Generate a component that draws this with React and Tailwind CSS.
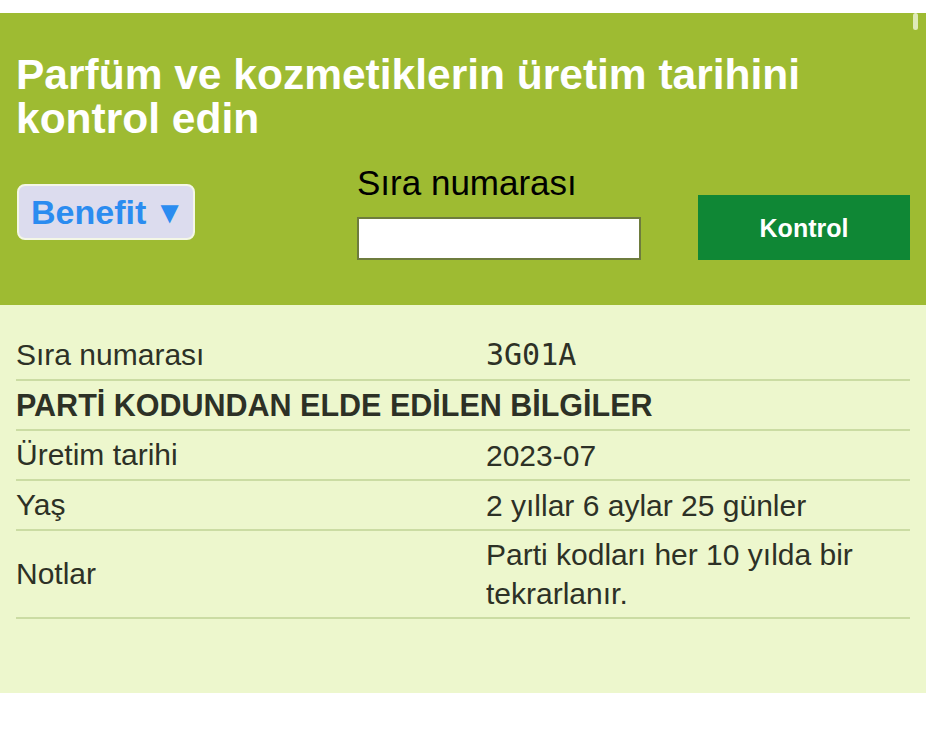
import { useState } from "react";

const rows = [
  { label: "Sıra numarası", value: "3G01A", mono: true },
  { label: "PARTİ KODUNDAN ELDE EDİLEN BİLGİLER", heading: true },
  { label: "Üretim tarihi", value: "2023-07" },
  { label: "Yaş", value: "2 yıllar 6 aylar 25 günler" },
  { label: "Notlar", value: "Parti kodları her 10 yılda bir tekrarlanır." },
];

export default function App() {
  const [serial, setSerial] = useState("");

  return (
    <div className="relative min-h-[741px] bg-white pt-[13px] font-['Liberation_Sans',Arial,sans-serif]">
      <div className="absolute right-[8px] top-[13px] h-[17px] w-[5px] rounded-full bg-[#dfeab8]" />

      <section className="bg-[#9ebb32] px-4 pt-[40px] pb-[45px]">
        <h1 className="text-[42.5px] font-bold leading-[44px] text-white">
          Parfüm ve kozmetiklerin üretim tarihini
          <br />
          kontrol edin
        </h1>

        <div className="mt-[22px] flex items-start">
          <button className="mt-[21px] ml-px flex h-[56px] w-[178px] items-center rounded-lg border-2 border-[#f4f7e6] bg-[#dcdcee] pl-3 text-[34px] font-bold text-[#2b8cf0]">
            Benefit
            <span className="ml-2 text-[31px] leading-none">▼</span>
          </button>

          <div className="ml-[162px] flex flex-col">
            <label className="text-[35px] leading-[40px] text-black">Sıra numarası</label>
            <input
              value={serial}
              onChange={(e) => setSerial(e.target.value)}
              className="mt-[14px] h-[43px] w-[284px] border-2 border-[#6e7c3d] bg-white px-2 text-[24px] outline-none"
            />
          </div>

          <button className="mt-[32px] ml-[57px] h-[65px] w-[212px] bg-[#0f8735] pt-[3px] text-[25px] font-bold text-white">
            Kontrol
          </button>
        </div>
      </section>

      <section className="bg-[#edf7cd] px-4 pt-[26px] pb-[74px]">
        {rows.map((row) => (
          <div
            key={row.label}
            className="flex items-center border-b-2 border-[#cbdca3] py-1 text-[30px] leading-[40px] text-[#2d3126]"
          >
            {row.heading ? (
              <div className="text-[30.5px] font-bold">{row.label}</div>
            ) : (
              <>
                <div className="w-[470px] shrink-0">{row.label}</div>
                <div
                  className={
                    row.mono
                      ? "font-['DejaVu_Sans_Mono',monospace] text-[30px]"
                      : "leading-[39px]"
                  }
                >
                  {row.value}
                </div>
              </>
            )}
          </div>
        ))}
      </section>
    </div>
  );
}
